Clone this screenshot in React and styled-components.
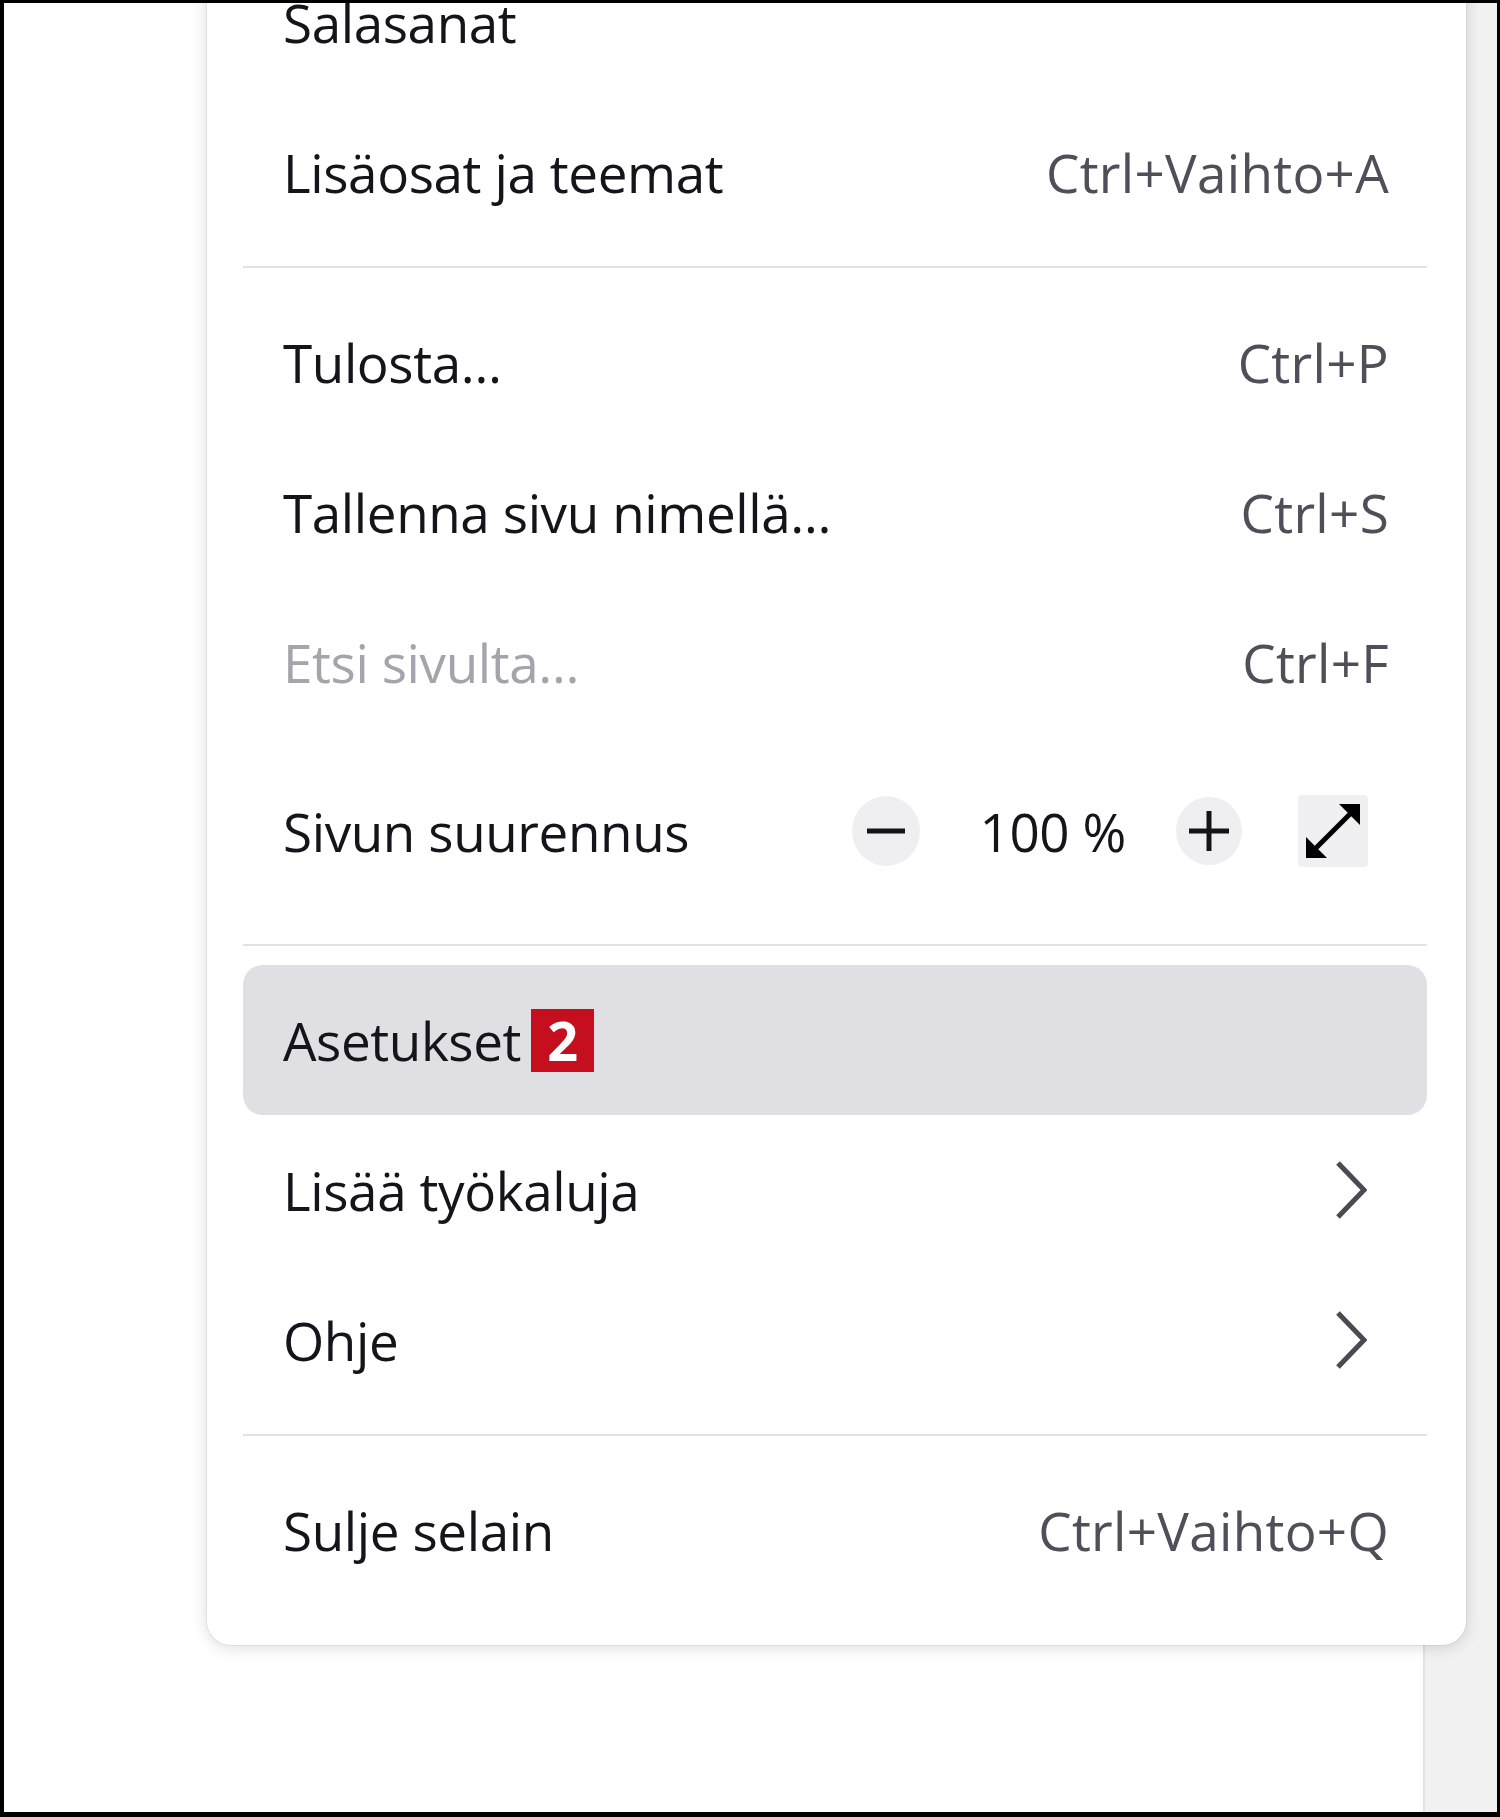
import React from 'react';
import styled, { createGlobalStyle } from 'styled-components';

const GlobalStyle = createGlobalStyle`
  html, body {
    margin: 0;
    padding: 0;
    background: #fff;
  }
  body {
    font-family: "Open Sans", "Noto Sans", "Liberation Sans", sans-serif;
  }
`;

const Frame = styled.div`
  box-sizing: border-box;
  width: 1500px;
  height: 1817px;
  overflow: hidden;
  border-style: solid;
  border-color: #000;
  border-width: 3px 3px 5px 4px;
  padding-left: 203px;
  background: linear-gradient(
    90deg,
    #fff 0 1419px,
    #e2e2e2 1419px 1421px,
    #f1f1f1 1421px
  );
`;

const Panel = styled.div`
  box-sizing: border-box;
  width: 1259px;
  margin-top: -56px;
  padding: 0 39px 40px 36px;
  background: #fff;
  border-radius: 0 0 24px 24px;
  box-shadow: 0 0 0 1px rgba(0, 0, 0, 0.05), 0 2px 16px rgba(0, 0, 0, 0.15);
`;

const Item = styled.div`
  box-sizing: border-box;
  display: flex;
  align-items: center;
  justify-content: space-between;
  height: ${(p) => p.$height || 150}px;
  padding: 0 38px 0 40px;
  border-radius: 20px;
  background: ${(p) => (p.$active ? '#dfdfe4' : 'transparent')};
  font-size: 53px;
  letter-spacing: -0.4px;
  color: ${(p) => (p.$disabled ? '#a4a4ac' : '#15141a')};
  white-space: nowrap;
`;

const Label = styled.span`
  display: flex;
  align-items: center;
`;

const Shortcut = styled.span`
  color: #4f4f5a;
  letter-spacing: 0.3px;
`;

const Badge = styled.span`
  display: inline-flex;
  align-items: center;
  justify-content: center;
  width: 63px;
  height: 63px;
  margin-left: 10px;
  background: #c50f1f;
  color: #fff;
  font-weight: 700;
  font-size: 54px;
  line-height: 1;
`;

const Separator = styled.hr`
  margin: 19px 0;
  border: 0;
  height: 2px;
  background: #e1e1e6;
`;

const ZoomGroup = styled.div`
  display: flex;
  align-items: center;
  margin-right: 21px;
`;

const RoundButton = styled.span`
  display: flex;
  align-items: center;
  justify-content: center;
  width: ${(p) => p.$size}px;
  height: ${(p) => p.$size + 2}px;
  border-radius: 50%;
  background: #efeff2;
  margin-right: ${(p) => p.$gap}px;
`;

const ZoomValue = styled.span`
  margin-right: 50px;
`;

const SquareButton = styled.span`
  display: flex;
  align-items: center;
  justify-content: center;
  width: 70px;
  height: 72px;
  border-radius: 4px;
  background: #f0f0f3;
`;

const Chevron = styled.svg`
  margin-right: 22px;
`;

const MinusIcon = () => (
  <svg width="38" height="6" viewBox="0 0 38 6">
    <rect x="0" y="0.5" width="38" height="5" fill="#15141a" />
  </svg>
);

const PlusIcon = () => (
  <svg width="40" height="40" viewBox="0 0 40 40">
    <rect x="0" y="17.5" width="40" height="5" fill="#15141a" />
    <rect x="17.5" y="0" width="5" height="40" fill="#15141a" />
  </svg>
);

const FullscreenIcon = () => (
  <svg width="54" height="54" viewBox="0 0 54 54">
    <line x1="9" y1="45" x2="45" y2="9" stroke="#000" strokeWidth="5" />
    <polygon points="54,0 54,21 33,0" fill="#000" />
    <polygon points="0,54 0,33 21,54" fill="#000" />
  </svg>
);

const ArrowIcon = () => (
  <Chevron width="32" height="60" viewBox="0 0 32 60">
    <polyline
      points="3,3 29,30 3,57"
      fill="none"
      stroke="#4a4a52"
      strokeWidth="5"
    />
  </Chevron>
);

const App = () => {
  return (
    <>
      <GlobalStyle />
      <Frame>
        <Panel>
          <Item>
            <Label>Salasanat</Label>
          </Item>
          <Item>
            <Label>Lisäosat ja teemat</Label>
            <Shortcut>Ctrl+Vaihto+A</Shortcut>
          </Item>
          <Separator />
          <Item>
            <Label>Tulosta…</Label>
            <Shortcut>Ctrl+P</Shortcut>
          </Item>
          <Item>
            <Label>Tallenna sivu nimellä…</Label>
            <Shortcut>Ctrl+S</Shortcut>
          </Item>
          <Item $disabled>
            <Label>Etsi sivulta…</Label>
            <Shortcut>Ctrl+F</Shortcut>
          </Item>
          <Item $height={188}>
            <Label>Sivun suurennus</Label>
            <ZoomGroup>
              <RoundButton $size={68} $gap={60}>
                <MinusIcon />
              </RoundButton>
              <ZoomValue>100 %</ZoomValue>
              <RoundButton $size={66} $gap={56}>
                <PlusIcon />
              </RoundButton>
              <SquareButton>
                <FullscreenIcon />
              </SquareButton>
            </ZoomGroup>
          </Item>
          <Separator />
          <Item $active>
            <Label>
              Asetukset<Badge>2</Badge>
            </Label>
          </Item>
          <Item>
            <Label>Lisää työkaluja</Label>
            <ArrowIcon />
          </Item>
          <Item>
            <Label>Ohje</Label>
            <ArrowIcon />
          </Item>
          <Separator />
          <Item>
            <Label>Sulje selain</Label>
            <Shortcut>Ctrl+Vaihto+Q</Shortcut>
          </Item>
        </Panel>
      </Frame>
    </>
  );
};

export default App;
